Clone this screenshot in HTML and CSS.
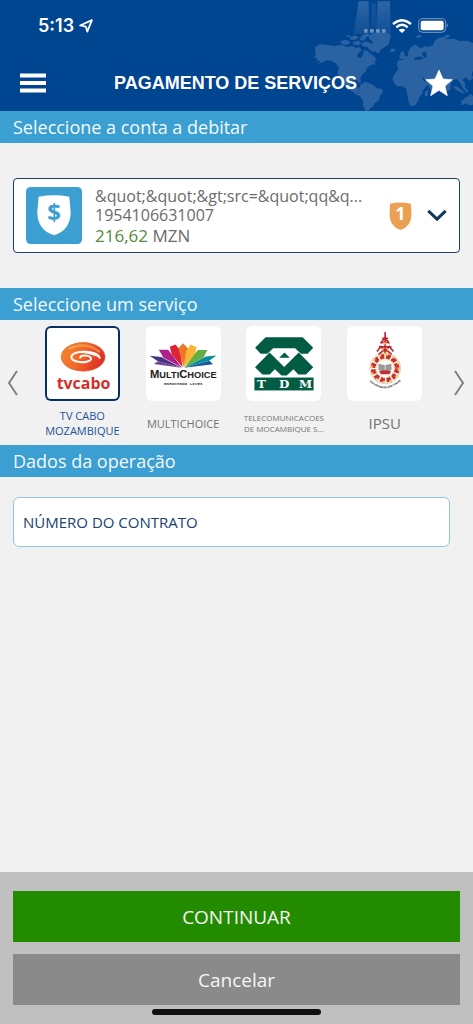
FILE: index.html
```html
<!DOCTYPE html>
<html lang="pt">
<head>
<meta charset="utf-8">
<meta name="viewport" content="width=device-width, initial-scale=1">
<title>Pagamento de Serviços</title>
<link rel="stylesheet" href="styles.css">
</head>
<body>
<div class="app">
  <header class="header">
    <svg class="map" viewBox="0 0 720 333" aria-hidden="true">
      <defs>
        <linearGradient id="beam" x1="0" y1="0" x2="0" y2="1">
          <stop offset="0" stop-color="#3f72ad" stop-opacity=".75"/>
          <stop offset="1" stop-color="#2d64a3" stop-opacity=".35"/>
        </linearGradient>
      </defs>
      <g fill="url(#beam)">
        <path d="M377 4h30l2 98h-47z"/>
        <path d="M416 10h12l4 92h-20z" opacity=".5"/>
        <path d="M434 4h37l2 94-14 4h-30z"/>
      </g>
      <g fill="#2a62a2">
        <path d="M246 142l14-9 20 1 24 4 22-3 18 6 14-4 10 7 12-3 6 10-10 8-4 10 10 6 8-10 2-14 12 2 8 8 10 6 10 12-8 6 4 8-14 2-12 8-4 12-10 8-6 12 2 12-6 3-6-9-14 0-6 8 4 14 12 2 8-5 2 8-6 8 8 8 8 3-6 3-14-7-12-10-14-5-8-14-8-12-8-10-4-16 4-12-10-14-12-8-16-2-10 6-14 6 6-8-12-3 4-6-12-2 6-5z"/>
        <path d="M322 124l16-5 14 7-8 9-18-2zM350 112l16-6 12 6-10 7-16 0zM360 126l16-4 10 8-10 6-14-2zM384 108l18-8 10 4-12 8-8 10-12-2zM386 130l14-6 18 8 14 14-8 10-12-4-8-10-16-4zM338 108l10-4 6 4-8 4z"/>
        <path d="M406 108l14-8 20-4 24 2 10 8-4 14-2 12-10 8-12 6-8 12-6 2-8-10-4-14-2-12-8-6z"/>
        <path d="M470 150l8-5 9 3-3 7-10 1z"/>
        <path d="M382 254l12-8 14 2 14 8 8 8 18 4 2 8-9 12-4 13-12 8-6 12-8 4-6 9-8-2-6-14-2-18-10-14-5-12 6-10z"/>
        <path d="M500 166l4-10 8-3 2 12 8 6-8 5-14 1z"/>
        <path d="M492 194l2-12 14-2 8-7 9-6 1-12 6-12 12-9 9 3 10 8 14-7 8 3 16-7 4-12 12-9 16-3 10 8 20-2 16 7 26 0 18 7 6-1v72l-8 9-6 14 6 9-11 9-13-10-8 7 8 13-2 10 12 11-5 5-12-12-8-16-11-13-9 3-8 12-3 18-7 3-9-15-5-12-18-5-10-2 8 10 7 5-10 12-12 6-7-12-10-18-6-9-16-2-4-9-7-3-2 6-10-10-5 4 8 11-4 3-11-12-12 6-6 7z"/>
        <path d="M494 211l14-5 14-2 7 8 16 2 14 3 7 15 8 12 15-1-5 12-14 15-2 12-9 8-4 14-10 14-13 0-6-15-3-18-3-18-10-8-17 0-10-9-4-14 4-12z"/>
        <path d="M576 278l7-9 4 3-4 16-7 1zM660 257l14 3 16 14 8 5-10 1-19-10zM684 305l10-10 12-6 6-8 8 7v26l-12 2-8-6-14 6zM704 231l8-9 6 4-4 9zM546 111l14-7 8 4-12 7zM632 110l12-8 8 5-8 8z"/>
      </g>
      <path fill="#004590" d="M568 157l10-2 4 14-7 5-7-10zM544 173l20-4 9 7-14 3-16 1z"/>
    </svg>
    <div class="status">
      <span class="clock">5:13</span>
      <svg class="locator" viewBox="0 0 39 39" aria-hidden="true"><path d="M3 18L36 3 23 35 19 21z" fill="none" stroke="#fff" stroke-width="5" stroke-linejoin="round"/></svg>
      <div class="signals">
        <svg width="22" height="4" viewBox="0 0 66 12" aria-hidden="true"><g fill="#6f93bf"><rect x="0" y="0" width="11" height="11" rx="3"/><rect x="18" y="0" width="11" height="11" rx="3"/><rect x="36" y="0" width="11" height="11" rx="3"/><rect x="54" y="0" width="11" height="11" rx="3"/></g></svg>
        <svg width="20" height="14" viewBox="0 0 60 42" aria-hidden="true"><g fill="none" stroke="#fff" stroke-width="7"><path d="M3 15Q30-8 57 15"/><path d="M13 25Q30 10 47 25"/></g><path d="M20 33Q30 25 40 33L30 42z" fill="#fff"/></svg>
        <svg width="31" height="15" viewBox="0 0 93 45" aria-hidden="true"><rect x="2" y="2" width="81" height="41" rx="12" fill="none" stroke="#7b9cc5" stroke-width="3"/><rect x="8" y="8" width="69" height="29" rx="6" fill="#fff"/><path d="M86 16q6 6 0 13z" fill="#7b9cc5"/></svg>
      </div>
    </div>
    <div class="titlebar">
      <button class="icon-btn" type="button" aria-label="Menu"><svg width="26" height="20" viewBox="0 0 26 20"><path d="M0 2.500h26M0 10h26M0 17.500h26" stroke="#fff" stroke-width="4"/></svg></button>
      <h1 class="title">PAGAMENTO DE SERVIÇOS</h1>
      <button class="icon-btn" type="button" aria-label="Favorito"><svg width="28" height="28" viewBox="0 0 84 84"><path d="M42 3l12 27 28 2-22 19 7 29-25-16-25 16 7-29L2 32l28-2z" fill="#fff" stroke="#fff" stroke-width="2" stroke-linejoin="round"/></svg></button>
    </div>
  </header>

  <main class="main">
    <h2 class="section">Seleccione a conta a debitar</h2>
    <div class="account-wrap">
      <button class="account" type="button">
        <svg class="account-icon" viewBox="0 0 168 171" aria-hidden="true"><rect width="168" height="171" rx="14" fill="#3b9fd1"/><path d="M38 29Q84 21 130 29L134 75Q134 129 84 145 34 129 34 75z" fill="#fff"/><text x="84" y="102" class="dollar">$</text></svg>
        <span class="account-text">
          <span class="account-name">&amp;quot;&amp;quot;&amp;gt;src=&amp;quot;qq&amp;q...</span>
          <span class="account-number">1954106631007</span>
          <span class="account-balance"><span class="amount">216,62</span> MZN</span>
        </span>
        <svg class="badge" viewBox="0 0 68 84" aria-hidden="true"><path d="M3 5Q34-2 65 5L67 35Q67 73 34 84 1 73 1 35z" fill="#eaa154"/><text x="34" y="54" class="badge-text">1</text></svg>
        <svg class="chevron" viewBox="0 0 60 38" aria-hidden="true"><path d="M4 5l26 25L56 5" fill="none" stroke="#12395a" stroke-width="9"/></svg>
      </button>
    </div>

    <h2 class="section">Seleccione um serviço</h2>
    <div class="carousel">
      <button class="arrow" type="button" aria-label="Anterior"><svg width="12" height="26" viewBox="0 0 12 26"><path d="M10 1L2 13l8 12" fill="none" stroke="#808080" stroke-width="2"/></svg></button>
      <button class="service selected" type="button" aria-pressed="true">
        <svg class="logo" viewBox="134 136 226 226" aria-hidden="true">
          <defs><linearGradient id="tv" x1="0" y1="0" x2="1" y2=".3"><stop offset="0" stop-color="#f58a2c"/><stop offset=".5" stop-color="#f36b29"/><stop offset="1" stop-color="#df3427"/></linearGradient></defs>
          <ellipse cx="249" cy="229" rx="66" ry="43" fill="url(#tv)" stroke="#cf5d24" stroke-width="2"/>
          <path d="M205 205Q258 180 299 215" fill="none" stroke="#fbb45c" stroke-width="7" opacity=".6"/>
          <path d="M299 232C291 210 226 207 214 226 207 248 265 250 273 236 275 224 242 221 240 231" fill="none" stroke="#fff" stroke-width="6" stroke-linecap="round"/>
          <path d="M222 217Q260 203 299 232 260 214 222 217z" fill="#fff"/>
          <text x="250" y="327" class="tvcabo">tvcabo</text>
        </svg>
        <span class="label">TV CABO MOZAMBIQUE</span>
      </button>
      <button class="service" type="button" aria-pressed="false">
        <svg class="logo" viewBox="45 31 227 227" aria-hidden="true">
          <path d="M56 121l35 4 60 32-70-19z" fill="#43347f"/><path d="M81 138l70 19-82-11z" fill="#764295"/>
          <path d="M84 103l28 0 42 54-57-31z" fill="#ae2186"/>
          <path d="M117 94l17-7 14 17 8 52-33-39z" fill="#df2234"/>
          <path d="M157 83l15 16-12 57-17-57z" fill="#ec7626"/>
          <path d="M180 87l18 8-4 22-35 39 7-48z" fill="#fbb637"/>
          <path d="M202 104l29 0-12 22-58 31z" fill="#62ae45"/>
          <path d="M226 123l32-3-22 16-75 21z" fill="#078c99"/><path d="M237 136l11 11-87 10z" fill="#145b9c"/>
          <text x="158" y="187" class="multi"><tspan class="multi-cap">M</tspan>ULTI<tspan class="multi-cap">C</tspan>HOICE</text>
          <text x="158" y="209" class="multi-sub">ENRICHING LIVES</text>
        </svg>
        <span class="label">MULTICHOICE</span>
      </button>
      <button class="service" type="button" aria-pressed="false">
        <svg class="logo" viewBox="33 31 226 227" aria-hidden="true">
          <path d="M92 65H204L236 97 219 115H199L181 98H115L97 115H77L60 97z" fill="#025b43"/>
          <path d="M104 111L148 155 192 111 236 156 214 178H191L176 162 156 181H140L120 162 104 178H82L60 156z" fill="#025b43"/>
          <path d="M133 127L149 111 165 127z" fill="#025b43"/>
          <rect x="58" y="187" width="179" height="39" fill="#025b43"/>
          <text x="79" y="219" class="tdm">T</text><text x="148" y="219" class="tdm">D</text><text x="213" y="219" class="tdm">M</text>
        </svg>
        <span class="label label-small">TELECOMUNICACOES DE MOCAMBIQUE S...</span>
      </button>
      <button class="service" type="button" aria-pressed="false">
        <svg class="logo" viewBox="36 31 226 227" aria-hidden="true">
          <circle cx="151" cy="159" r="47" fill="#fdf8f1" stroke="#d8d2cc" stroke-width="3"/>
          <circle cx="151" cy="159" r="36" fill="none" stroke="#c92c3c" stroke-width="15" stroke-dasharray="14 5"/>
          <circle cx="151" cy="159" r="42" fill="none" stroke="#eed24f" stroke-width="7" stroke-dasharray="8 14"/>
          <circle cx="151" cy="159" r="28" fill="none" stroke="#f3df80" stroke-width="4" stroke-dasharray="6 5"/>
          <path d="M131 145l19 5 20-5v20l-20 4-19-4z" fill="#999"/><path d="M151 150v18" stroke="#fff" stroke-width="2"/>
          <path d="M133 168q18-6 36 0l-5 9h-26z" fill="#c22c3a"/>
          <g fill="none" stroke="#bf2639" stroke-width="5"><path d="M151 49v66M142 68h18M138 81h26M132 94h38M126 108l12-15 13 16 13-16 12 15M131 117l20-16 20 16M137 84l13-18 14 18"/></g>
          <path d="M146 84h9M140 102h6M156 102h6M148 115h7" stroke="#f4d04b" stroke-width="6"/>
          <path id="motto" d="M94 189Q149 251 208 188" fill="none"/>
          <text class="motto"><textPath href="#motto" startOffset="50%">UNIVERSIDADE SÃO TOMÁS</textPath></text>
        </svg>
        <span class="label label-large">IPSU</span>
      </button>
      <button class="arrow" type="button" aria-label="Seguinte"><svg width="12" height="26" viewBox="0 0 12 26"><path d="M2 1l8 12-8 12" fill="none" stroke="#808080" stroke-width="2"/></svg></button>
    </div>

    <h2 class="section">Dados da operação</h2>
    <form class="form">
      <input class="field" type="text" placeholder="NÚMERO DO CONTRATO" aria-label="Número do contrato">
    </form>
  </main>

  <footer class="footer">
    <button class="action primary" type="button">CONTINUAR</button>
    <button class="action secondary" type="button">Cancelar</button>
    <div class="home-bar"></div>
  </footer>
</div>
</body>
</html>
```
FILE: styles.css
```css
* { box-sizing: border-box; }
body { margin: 0; background: #f1f1f1; font-family: "Open Sans", "Noto Sans", sans-serif; color: #6b6b6b; }
button { border: 0; padding: 0; background: none; font: inherit; color: inherit; cursor: pointer; }
svg { display: block; flex: none; }
.app { min-height: 100vh; display: flex; flex-direction: column; }

.header { position: relative; background: #004590; color: #fff; padding-bottom: 10px; }
.map { position: absolute; right: 0; top: 0; width: 240px; height: 111px; }
.status { position: relative; display: flex; align-items: center; height: 51px; padding: 0 24px 0 38px; }
.clock { font: 600 18px/24px Inter, sans-serif; }
.locator { width: 14px; height: 14px; margin-left: 5px; }
.signals { display: flex; align-items: center; gap: 6px; margin-left: auto; }
.signals svg:first-child { align-self: flex-end; }
.titlebar { position: relative; display: flex; align-items: center; justify-content: space-between; height: 50px; padding: 14px 20px 0; }
.title { margin: 0; font: bold 18px/24px "Liberation Sans", Arial, sans-serif; }

.main { flex: 1; }
.section { margin: 0; padding: 0 13px; background: #3b9fd1; color: #f4fafd; font-size: 18px; font-weight: 400; line-height: 32px; }

.account-wrap { padding: 35px 13px; }
.account { display: flex; align-items: center; width: 100%; height: 75px; padding: 0 12px; border: 1px solid #18426f; border-radius: 4px; background: #fff; text-align: left; }
.account-icon { width: 56px; height: 57px; }
.account-text { flex: 1; min-width: 0; display: flex; flex-direction: column; margin: 0 19px 0 13px; padding-top: 2px; font-size: 16px; line-height: 19px; }
.account-name { overflow: hidden; text-overflow: ellipsis; white-space: nowrap; }
.account-balance { font-size: 17px; line-height: 21px; }
.amount { color: #56893b; }
.dollar { font: bold 72px "Open Sans", sans-serif; fill: #3b9fd1; text-anchor: middle; }
.badge { width: 23px; height: 28px; }
.badge-text { font: bold 52px "Open Sans", sans-serif; fill: #fff; text-anchor: middle; }
.chevron { width: 20px; height: 13px; margin-left: 15px; }

.carousel { display: grid; grid-template-columns: 32px repeat(4, 1fr) 38px; padding-top: 6px; height: 125px; }
.arrow { display: flex; align-items: center; justify-content: center; height: 113px; }
.arrow:first-child { padding-right: 6px; }
.arrow:last-child { padding-left: 10px; }
.service { display: flex; flex-direction: column; align-items: center; color: #737373; }
.logo { width: 75px; height: 75px; border-radius: 6px; background: #fff; }
.selected .logo { box-shadow: inset 0 0 0 2px #082e66; }
.label { display: flex; align-items: center; justify-content: center; width: 80px; height: 44px; font-size: 11px; line-height: 15px; text-align: center; }
.selected .label { color: #1c539a; }
.label-small { font-size: 8px; line-height: 11px; }
.label-large { font-size: 15px; }
.tvcabo { font: bold 48px "Open Sans", sans-serif; fill: #d52e2b; text-anchor: middle; }
.multi { font: bold 28px "Liberation Sans", sans-serif; fill: #222; text-anchor: middle; }
.multi-cap { font-size: 34px; }
.multi-sub { font: bold 13px "Liberation Mono", monospace; fill: #444; text-anchor: middle; }
.tdm { font: bold 36px "DejaVu Serif", serif; fill: #fff; text-anchor: middle; }
.motto { font: bold 8px "Open Sans", sans-serif; fill: #333; text-anchor: middle; }

.form { padding: 20px 23px 20px 13px; }
.field { display: block; width: 100%; height: 50px; padding: 0 9px; border: 1px solid #92c5dc; border-radius: 6px; background: #fff; font: 15px/20px "Open Sans", "Noto Sans", sans-serif; color: #18426f; }
.field::placeholder { color: #18426f; opacity: 1; }

.footer { display: flex; flex-direction: column; gap: 12px; padding: 19px 13px 9px; background: #c0c0c0; }
.action { height: 51px; color: #f6f6f6; font-size: 19px; line-height: 24px; }
.primary { background: #228b00; }
.secondary { background: #8a8a8a; }
.home-bar { align-self: center; width: 169px; height: 6px; margin-top: -8px; border-radius: 3px; background: #111; }
```
